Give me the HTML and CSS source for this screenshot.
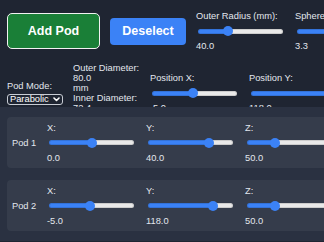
FILE: index.html
```html
<!DOCTYPE html>
<html lang="en">
<head>
    <meta charset="UTF-8">
    <meta name="viewport" content="width=device-width, initial-scale=1.0">
    <title>Pod Layout Designer</title>
    <link rel="stylesheet" href="styles.css">
</head>
<body>
    <div class="app">
        <div class="toolbar">
            <div class="toolbar-row">
                <button class="btn btn-add">Add Pod</button>
                <button class="btn btn-deselect">Deselect</button>

                <div class="control">
                    <label for="outerRadius">Outer Radius (mm):</label>
                    <input type="range" class="slider" id="outerRadius" min="10" max="100" step="0.1" value="40" style="--p: 0.333">
                    <span class="value">40.0</span>
                </div>

                <div class="control">
                    <label for="sphereRadius">Sphere Radius (mm):</label>
                    <input type="range" class="slider" id="sphereRadius" min="1" max="5" step="0.1" value="3.3" style="--p: 0.575">
                    <span class="value">3.3</span>
                </div>
            </div>

            <div class="toolbar-row">
                <div class="mode">
                    <label for="podMode">Pod Mode:</label>
                    <div class="select-wrap">
                        <select id="podMode">
                            <option value="parabolic">Parabolic</option>
                            <option value="flat">Flat</option>
                        </select>
                        <svg class="chevron" width="7" height="5" viewBox="0 0 7 5">
                            <path d="M1 1 L3.5 3.5 L6 1" fill="none" stroke="#fff" stroke-width="1.6" stroke-linecap="round" stroke-linejoin="round"/>
                        </svg>
                    </div>
                </div>

                <div class="info">
                    <span>Outer Diameter:</span>
                    <span>80.0</span>
                    <span>mm</span>
                    <span>Inner Diameter:</span>
                    <span>72.4</span>
                    <span>mm</span>
                </div>

                <div class="control">
                    <label for="posX">Position X:</label>
                    <input type="range" class="slider" id="posX" min="-100" max="100" step="0.1" value="-5" style="--p: 0.475">
                    <span class="value">-5.0</span>
                </div>

                <div class="control">
                    <label for="posY">Position Y:</label>
                    <input type="range" class="slider" id="posY" min="-118" max="118" step="0.1" value="118" style="--p: 1">
                    <span class="value">118.0</span>
                </div>
            </div>
        </div>

        <div class="pod-list">
            <div class="pod-card">
                <span class="pod-name">Pod 1</span>
                <div class="control">
                    <label>X:</label>
                    <input type="range" class="slider" min="-100" max="100" step="0.1" value="0" style="--p: 0.5">
                    <span class="value">0.0</span>
                </div>
                <div class="control">
                    <label>Y:</label>
                    <input type="range" class="slider" min="-922" max="378" step="0.1" value="40" style="--p: 0.74">
                    <span class="value">40.0</span>
                </div>
                <div class="control">
                    <label>Z:</label>
                    <input type="range" class="slider" min="0" max="160" step="0.1" value="50" style="--p: 0.3125">
                    <span class="value">50.0</span>
                </div>
            </div>

            <div class="pod-card">
                <span class="pod-name">Pod 2</span>
                <div class="control">
                    <label>X:</label>
                    <input type="range" class="slider" min="-100" max="100" step="0.1" value="-5" style="--p: 0.475">
                    <span class="value">-5.0</span>
                </div>
                <div class="control">
                    <label>Y:</label>
                    <input type="range" class="slider" min="-922" max="378" step="0.1" value="118" style="--p: 0.8">
                    <span class="value">118.0</span>
                </div>
                <div class="control">
                    <label>Z:</label>
                    <input type="range" class="slider" min="0" max="160" step="0.1" value="50" style="--p: 0.3125">
                    <span class="value">50.0</span>
                </div>
            </div>
        </div>
    </div>
</body>
</html>
```

FILE: styles.css
```css
body {
    margin: 0;
    background-color: #1f2532;
    color: #e3e7ee;
    font-family: "Liberation Sans", Arial, sans-serif;
    font-size: 9.3px;
    overflow: hidden;
}

.app {
    width: 640px;
}

.toolbar {
    height: 107px;
    box-sizing: border-box;
    padding: 11px 7px 0;
    display: flex;
    flex-direction: column;
    gap: 12px;
    overflow: hidden;
}

.toolbar-row {
    display: flex;
    align-items: center;
    gap: 10px;
}

.btn {
    flex-shrink: 0;
    font-family: inherit;
    font-weight: bold;
    font-size: 12.5px;
    color: white;
    border: none;
    cursor: pointer;
    padding: 0;
}

.btn-add {
    width: 93px;
    height: 36px;
    background-color: #1a7f37;
    border: 1px solid #f2f2f2;
    border-radius: 5px;
}

.btn-deselect {
    width: 76px;
    height: 27px;
    background-color: #3b82f6;
    border-radius: 4px;
}

.control {
    flex-shrink: 0;
    display: flex;
    flex-direction: column;
    line-height: 10px;
}

/* slider: fill stops at the thumb centre, --p is the value as 0..1 */
.slider {
    -webkit-appearance: none;
    appearance: none;
    width: 85px;
    height: 16px;
    margin: 2px;
    background: transparent;
    --fill: calc(5px + var(--p) * 75px);
}

.slider::-webkit-slider-runnable-track {
    height: 5px;
    border-radius: 3px;
    background: linear-gradient(to right, #3b82f6 var(--fill), #e9e9e9 var(--fill));
    box-shadow: inset 0 0 0 1px rgba(0, 0, 0, 0.12);
}

.slider::-webkit-slider-thumb {
    -webkit-appearance: none;
    width: 10px;
    height: 10px;
    margin-top: -2.5px;
    border-radius: 50%;
    background-color: #3b82f6;
}

.mode {
    flex-shrink: 0;
    display: flex;
    flex-direction: column;
    align-items: flex-start;
    line-height: 10px;
}

.select-wrap {
    position: relative;
    margin-top: 3px;
}

.select-wrap select {
    display: block;
    -webkit-appearance: none;
    appearance: none;
    width: 56px;
    height: 11px;
    box-sizing: border-box;
    padding: 0 0 0 2px;
    font-family: inherit;
    font-size: 9.3px;
    line-height: 9px;
    color: white;
    background-color: transparent;
    border: 1px solid #c8ccd4;
    border-radius: 3px;
}

.chevron {
    position: absolute;
    right: 3px;
    top: 3px;
    pointer-events: none;
}

.info {
    flex-shrink: 0;
    width: 67px;
    display: flex;
    flex-direction: column;
    line-height: 10px;
}

.pod-list {
    background-color: #2a3141;
    padding: 10px 7px;
    display: flex;
    flex-direction: column;
    gap: 12px;
}

.pod-card {
    display: flex;
    align-items: center;
    gap: 10px;
    height: 51px;
    box-sizing: border-box;
    padding: 0 5px;
    background-color: #353c4b;
    border-radius: 4px;
}

.pod-name {
    width: 25px;
    flex-shrink: 0;
}
```
